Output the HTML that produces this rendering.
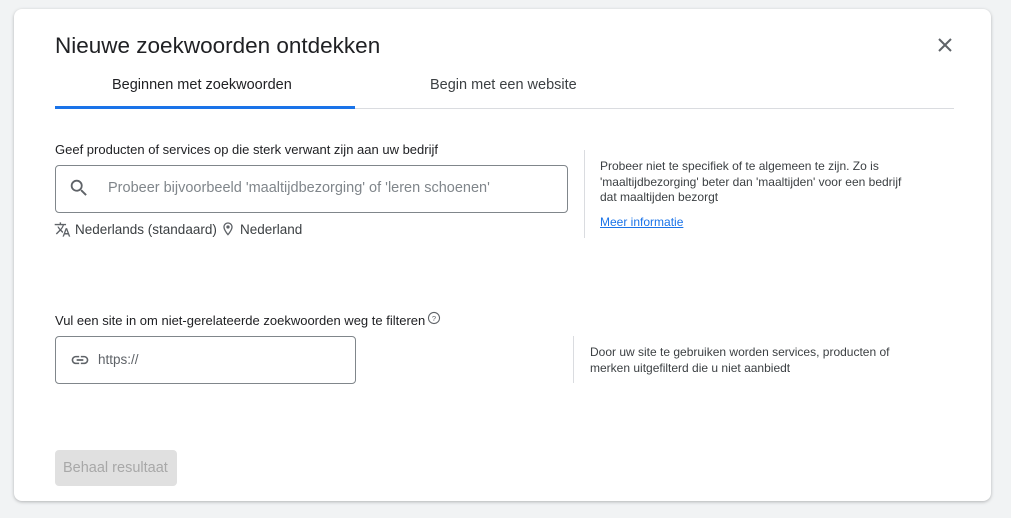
<!DOCTYPE html>
<html><head><style>
body{margin:0;width:1011px;height:518px;background:#f1f3f4;font-family:"Liberation Sans",Arial,sans-serif;position:relative;overflow:hidden;color:#3c4043}
.card{position:absolute;left:14px;top:9px;width:977px;height:492px;background:#fff;border-radius:8px;box-shadow:0 1px 3px rgba(60,64,67,.35)}
.a{position:absolute;white-space:nowrap}
</style></head><body>
<div class="card"></div>
<div class="a" style="left:55px;top:33px;font-size:22.5px;color:#202124">Nieuwe zoekwoorden ontdekken</div>
<svg class="a" style="left:936px;top:36px" width="18" height="18" viewBox="0 0 18 18"><path d="M3 3L15 15M15 3L3 15" stroke="#5f6368" stroke-width="2"/></svg>
<div class="a" style="left:112px;top:77px;font-size:14.5px;color:#202124">Beginnen met zoekwoorden</div>
<div class="a" style="left:430px;top:77px;font-size:14.5px;color:#3c4043">Begin met een website</div>
<div class="a" style="left:55px;top:108px;width:899px;height:1px;background:#dadce0"></div>
<div class="a" style="left:55px;top:106px;width:300px;height:3px;background:#1a73e8"></div>
<div class="a" style="left:55px;top:142px;font-size:13px;color:#202124">Geef producten of services op die sterk verwant zijn aan uw bedrijf</div>
<div class="a" style="left:55px;top:165px;width:511px;height:46px;border:1px solid #80868b;border-radius:4px"></div>
<svg class="a" style="left:68px;top:177px" width="22" height="22" viewBox="0 0 24 24"><path fill="#5f6368" d="M15.5 14h-.79l-.28-.27A6.47 6.47 0 0016 9.5 6.5 6.5 0 109.5 16c1.61 0 3.09-.59 4.23-1.57l.27.28v.79l5 4.99L20.49 19l-4.99-5zm-6 0C7.01 14 5 11.99 5 9.5S7.01 5 9.5 5 14 7.01 14 9.5 11.99 14 9.5 14z"/></svg>
<div class="a" style="left:108px;top:180px;font-size:14.5px;color:#80868b">Probeer bijvoorbeeld 'maaltijdbezorging' of 'leren schoenen'</div>
<svg class="a" style="left:54px;top:221px" width="17" height="17" viewBox="0 0 24 24"><path fill="#5f6368" d="M12.87 15.07l-2.54-2.51.03-.03A17.52 17.52 0 0014.07 6H17V4h-7V2H8v2H1v2h11.17C11.5 7.92 10.44 9.75 9 11.35 8.07 10.32 7.3 9.19 6.69 8h-2c.73 1.63 1.73 3.17 2.98 4.56l-5.09 5.02L4 19l5-5 3.11 3.11.76-2.04zM18.5 10h-2L12 22h2l1.12-3h4.75L21 22h2l-4.5-12zm-2.62 7l1.62-4.33L19.12 17h-3.24z"/></svg>
<div class="a" style="left:75px;top:222px;font-size:13.5px">Nederlands (standaard)</div>
<svg class="a" style="left:220px;top:221px" width="16" height="16" viewBox="0 0 24 24"><path fill="#5f6368" d="M12 2C8.13 2 5 5.13 5 9c0 5.25 7 13 7 13s7-7.75 7-13c0-3.87-3.13-7-7-7zM7 9c0-2.76 2.24-5 5-5s5 2.24 5 5c0 2.88-2.88 7.19-5 9.88C9.92 16.21 7 11.85 7 9zm5 2.5a2.5 2.5 0 100-5 2.5 2.5 0 000 5z"/></svg>
<div class="a" style="left:240px;top:222px;font-size:13.5px">Nederland</div>
<div class="a" style="left:584px;top:150px;width:1px;height:88px;background:#dadce0"></div>
<div class="a" style="left:600px;top:159px;font-size:12px;line-height:15.5px;color:#3c4043;white-space:normal;width:350px">Probeer niet te specifiek of te algemeen te zijn. Zo is<br>'maaltijdbezorging' beter dan 'maaltijden' voor een bedrijf<br>dat maaltijden bezorgt</div>
<div class="a" style="left:600px;top:215px;font-size:12px;color:#1a73e8;text-decoration:underline">Meer informatie</div>
<div class="a" style="left:55px;top:313px;font-size:13px;color:#202124">Vul een site in om niet-gerelateerde zoekwoorden weg te filteren</div>
<svg class="a" style="left:427px;top:311px" width="14" height="14" viewBox="0 0 24 24"><circle cx="12" cy="12" r="9.5" fill="none" stroke="#5f6368" stroke-width="1.8"/><text x="12" y="17" font-size="13" text-anchor="middle" fill="#5f6368" font-family="Liberation Sans">?</text></svg>
<div class="a" style="left:55px;top:336px;width:299px;height:46px;border:1px solid #80868b;border-radius:4px"></div>
<svg class="a" style="left:69px;top:350px" width="22" height="20" viewBox="0 0 24 24"><path fill="#5f6368" d="M3.9 12c0-1.71 1.39-3.1 3.1-3.1h4V7H7c-2.76 0-5 2.24-5 5s2.24 5 5 5h4v-1.9H7c-1.71 0-3.1-1.39-3.1-3.1zM8 13h8v-2H8v2zm9-6h-4v1.9h4c1.71 0 3.1 1.39 3.1 3.1s-1.39 3.1-3.1 3.1h-4V17h4c2.76 0 5-2.24 5-5s-2.24-5-5-5z"/></svg>
<div class="a" style="left:98px;top:352px;font-size:13.5px;color:#5f6368">https://</div>
<div class="a" style="left:573px;top:336px;width:1px;height:47px;background:#dadce0"></div>
<div class="a" style="left:590px;top:344px;font-size:12px;line-height:16px;white-space:normal;width:340px">Door uw site te gebruiken worden services, producten of<br>merken uitgefilterd die u niet aanbiedt</div>
<div class="a" style="left:55px;top:450px;width:122px;height:36px;background:#e0e0e0;border-radius:4px"></div>
<div class="a" style="left:63px;top:460px;font-size:14.5px;color:#a8a8a8">Behaal resultaat</div>
</body></html>
